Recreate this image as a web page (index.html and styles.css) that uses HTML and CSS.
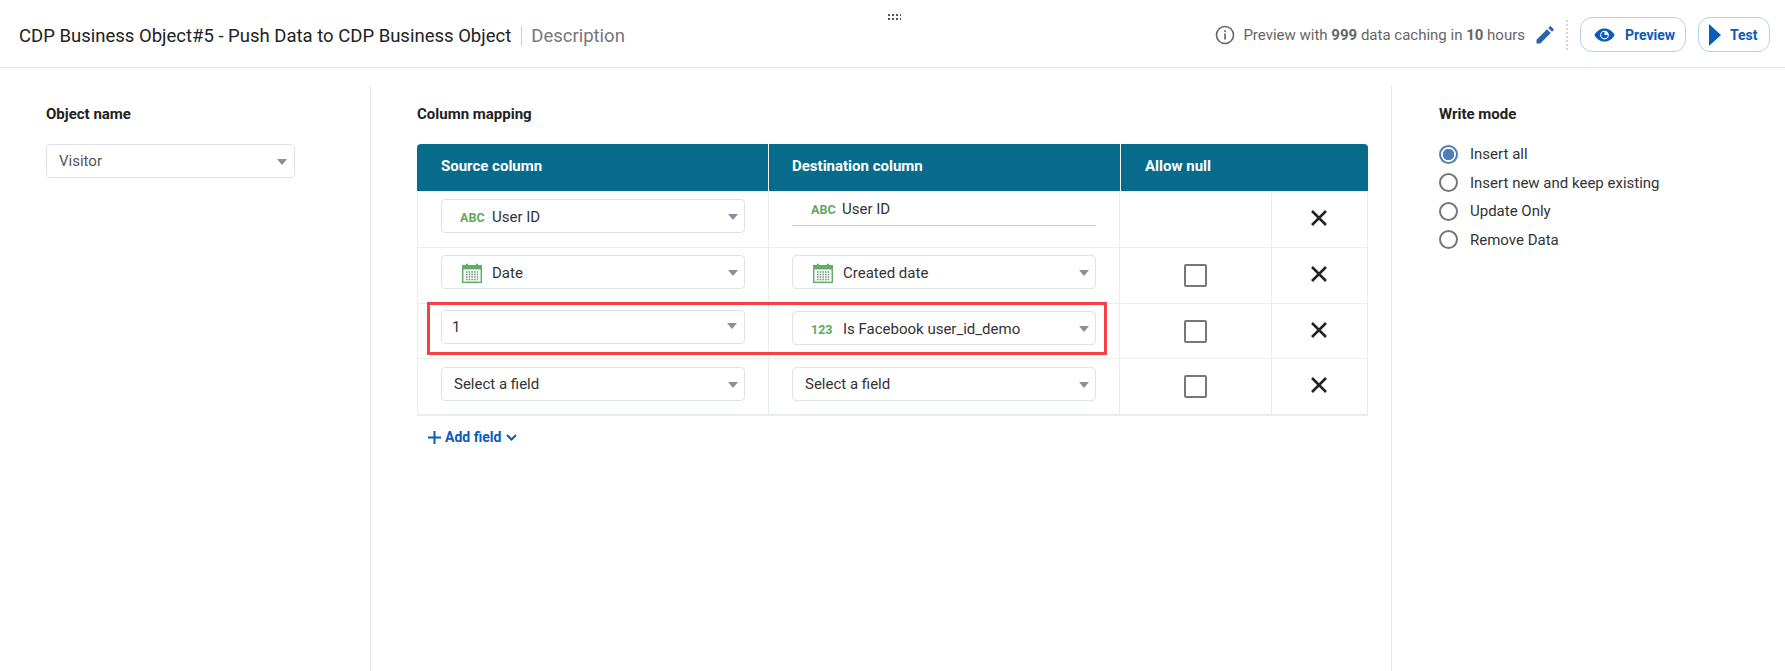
FILE: index.html
```html
<!DOCTYPE html>
<html>
  <head>
    <meta charset="UTF-8" />
    <title>CDP Business Object#5</title>
    <link rel="stylesheet" href="styles.css">
  </head>
  <body>
    <svg class="defs" width="0" height="0">
      <symbol id="calendar" viewBox="0 0 20 20">
        <rect x="0.7" y="2.7" width="18.6" height="16.6" fill="#f4faf2" stroke="#62ad6a" stroke-width="1.4"/>
        <rect x="1" y="3" width="18" height="3.4" fill="#62ad6a"/>
        <rect x="4" y="0.5" width="2" height="4.5" rx="1" fill="#62ad6a"/>
        <rect x="14" y="0.5" width="2" height="4.5" rx="1" fill="#62ad6a"/>
        <path d="M4 9h12M4 11.500h12M4 14h12M4 16.500h12" stroke="#6f9480" stroke-width="1.300" stroke-dasharray="1.500 1.200"/>
      </symbol>
      <symbol id="close" viewBox="0 0 18 18">
        <path d="M2 2l14 14M16 2L2 16" stroke="#222" stroke-width="2.600" fill="none"/>
      </symbol>
    </svg>

    <div class="drag_handle"></div>

    <header class="top_bar">
      <div class="top_title">
        <span class="title_name">CDP Business Object#5 - Push Data to CDP Business Object</span>
        <span class="title_desc">Description</span>
      </div>
      <div class="top_actions">
        <svg class="info_icon" width="20" height="20" viewBox="0 0 20 20">
          <circle cx="10" cy="10" r="8.500" fill="none" stroke="#666" stroke-width="1.600"/>
          <rect x="9.200" y="8.500" width="1.700" height="6" fill="#666"/>
          <rect x="9.200" y="5.300" width="1.700" height="1.800" fill="#666"/>
        </svg>
        <span class="cache_text">Preview with <b>999</b> data caching in <b>10</b> hours</span>
        <svg class="pencil_icon" width="18" height="18" viewBox="0 0 18 18">
          <path d="M0.500 17.500v-3.800L11 3.200l3.800 3.800L4.300 17.500zM12.200 2l1.500-1.500a1 1 0 0 1 1.400 0l2.400 2.400a1 1 0 0 1 0 1.400L16 5.800z" fill="#2a64ad"/>
        </svg>
        <span class="dotted_sep"></span>
        <button class="btn btn_preview">
          <svg width="21" height="14" viewBox="0 0 24 16">
            <path d="M0.500 8C3 3.200 7 0.500 12 0.500S21 3.200 23.500 8C21 12.800 17 15.500 12 15.500S3 12.800 0.500 8z" fill="#0a5cb8"/>
            <circle cx="12" cy="8" r="5" fill="#fff"/>
            <path d="M12 4.200a3.800 3.800 0 1 0 3.800 3.800H12z" fill="#0a5cb8"/>
          </svg>
          Preview
        </button>
        <button class="btn btn_test">
          <svg width="12" height="24" viewBox="0 0 13 24"><path d="M0 0l13 12L0 24z" fill="#0a5cb8"/></svg>
          Test
        </button>
      </div>
    </header>

    <main class="panels">
      <section class="panel panel_left">
        <div class="panel_label">Object name</div>
        <div class="select select_object">
          <span class="select_text">Visitor</span>
          <i class="caret"></i>
        </div>
      </section>

      <section class="panel panel_middle">
        <div class="panel_label">Column mapping</div>
        <div class="mapping">
          <div class="mapping_head">
            <div>Source column</div>
            <div>Destination column</div>
            <div>Allow null</div>
          </div>

          <div class="mapping_row">
            <div class="cell">
              <div class="select select_typed"><span class="type_tag">ABC</span><span>User ID</span><i class="caret"></i></div>
            </div>
            <div class="cell cell_plain">
              <div class="plain_field"><span class="type_tag">ABC</span><span>User ID</span></div>
            </div>
            <div class="cell"></div>
            <div class="cell cell_center"><svg class="x_icon"><use href="#close"/></svg></div>
          </div>

          <div class="mapping_row">
            <div class="cell">
              <div class="select select_typed"><svg class="cal_icon"><use href="#calendar"/></svg><span>Date</span><i class="caret"></i></div>
            </div>
            <div class="cell">
              <div class="select select_typed"><svg class="cal_icon"><use href="#calendar"/></svg><span>Created date</span><i class="caret"></i></div>
            </div>
            <div class="cell cell_center"><span class="checkbox"></span></div>
            <div class="cell cell_center"><svg class="x_icon"><use href="#close"/></svg></div>
          </div>

          <div class="mapping_row mapping_row_short">
            <div class="cell">
              <div class="select select_value"><span>1</span><i class="caret"></i></div>
            </div>
            <div class="cell">
              <div class="select select_typed"><span class="type_tag">123</span><span>Is Facebook user_id_demo</span><i class="caret"></i></div>
            </div>
            <div class="cell cell_center"><span class="checkbox"></span></div>
            <div class="cell cell_center"><svg class="x_icon"><use href="#close"/></svg></div>
            <div class="highlight_box"></div>
          </div>

          <div class="mapping_row">
            <div class="cell">
              <div class="select select_empty"><span>Select a field</span><i class="caret"></i></div>
            </div>
            <div class="cell">
              <div class="select select_empty"><span>Select a field</span><i class="caret"></i></div>
            </div>
            <div class="cell cell_center"><span class="checkbox"></span></div>
            <div class="cell cell_center"><svg class="x_icon"><use href="#close"/></svg></div>
          </div>
        </div>

        <div class="add_field">
          <svg width="13" height="13" viewBox="0 0 13 13"><path d="M6.500 0v13M0 6.500h13" stroke="#0a5cb8" stroke-width="2"/></svg>
          <span>Add field</span>
          <svg width="11" height="7" viewBox="0 0 11 7"><path d="M1 1l4.500 4.500L10 1" stroke="#0a5cb8" stroke-width="2" fill="none"/></svg>
        </div>
      </section>

      <section class="panel panel_right">
        <div class="panel_label">Write mode</div>
        <ul class="radio_list">
          <li><i class="radio radio_on"></i>Insert all</li>
          <li><i class="radio"></i>Insert new and keep existing</li>
          <li><i class="radio"></i>Update Only</li>
          <li><i class="radio"></i>Remove Data</li>
        </ul>
      </section>
    </main>
  </body>
</html>
```

FILE: styles.css
```css
* {
  margin: 0;
  padding: 0;
  box-sizing: border-box;
}
body {
  font-family: "Roboto", "Liberation Sans", sans-serif;
  font-size: 15px;
  color: #333;
  background: #fff;
  height: 671px;
  overflow: hidden;
  position: relative;
}
li {
  list-style-type: none;
}
.defs {
  position: absolute;
}
.drag_handle {
  position: absolute;
  left: 888px;
  top: 14px;
  width: 13px;
  height: 6px;
  background: radial-gradient(circle at 1px 1px, #555 1px, transparent 1.2px) 0 0 / 4px 4px;
}

/* top bar */
.top_bar {
  height: 68px;
  border-bottom: 1px solid #e4e6e8;
  display: flex;
  align-items: center;
  justify-content: space-between;
  padding: 0 15px 0 19px;
}
.top_title {
  display: flex;
  align-items: center;
  font-size: 18.500px;
  margin-top: 4px;
}
.title_name {
  color: #222;
  padding-right: 10px;
  border-right: 1px solid #ccc;
  line-height: 20px;
}
.title_desc {
  color: #777;
  padding-left: 9px;
}
.top_actions {
  display: flex;
  align-items: center;
  margin-top: 2px;
}
.info_icon {
  margin-right: 8px;
}
.cache_text {
  color: #666;
  margin-right: 11px;
}
.cache_text b {
  font-weight: 700;
}
.dotted_sep {
  height: 30px;
  border-left: 2px dotted #d5d5d5;
  margin: 0 12px;
}
.btn {
  height: 35px;
  border: 1px solid #b6cfe8;
  border-radius: 12px;
  background: #fff;
  color: #0a5cb8;
  font-family: inherit;
  font-size: 14px;
  font-weight: 700;
  display: flex;
  align-items: center;
}
.btn_preview {
  width: 106px;
  padding-left: 13px;
  gap: 10px;
  margin-right: 12px;
}
.btn_test {
  width: 72px;
  padding-left: 10px;
  gap: 9px;
}

/* three panels */
.panels {
  display: flex;
  padding-top: 18px;
}
.panel {
  height: 585px;
  padding-top: 18px;
}
.panel_label {
  font-weight: 700;
  color: #222;
  line-height: 20px;
  margin-bottom: 20px;
}
.panel_left {
  width: 371px;
  padding-left: 46px;
  border-right: 1px solid #e4e6e8;
}
.panel_middle {
  width: 1021px;
  padding-left: 46px;
  padding-right: 24px;
  border-right: 1px solid #e4e6e8;
}
.panel_right {
  padding-left: 47px;
}

/* select boxes */
.select {
  position: relative;
  height: 34px;
  border: 1px solid #dfe3e6;
  border-radius: 4px;
  display: flex;
  align-items: center;
  padding-left: 19px;
  background: #fff;
}
.select_typed {
  padding-top: 2px;
}
.select_object {
  width: 249px;
  padding-left: 12px;
  color: #555;
}
.select_value {
  padding-left: 10px;
  margin-top: -1px;
}
.select_empty {
  padding-left: 12px;
}
.caret {
  position: absolute;
  right: 6px;
  top: 14px;
  border-left: 5px solid transparent;
  border-right: 5px solid transparent;
  border-top: 6px solid #8a8f98;
}
.select_object .caret,
.select_value .caret {
  right: 7px;
}
.select_value .caret {
  top: 12px;
}
.type_tag {
  color: #62a85c;
  font-size: 12.500px;
  font-weight: 700;
  width: 31px;
}
.select .type_tag {
  margin-left: -1px;
  width: 32px;
}
.cal_icon {
  width: 20px;
  height: 20px;
  margin-right: 10px;
  margin-left: 1px;
}

/* mapping table */
.mapping {
  width: 951px;
}
.mapping_head,
.mapping_row {
  display: grid;
}
.mapping_head {
  grid-template-columns: 352px 352px 1fr;
  height: 48px;
  background: #076c8c;
  color: #fff;
  font-weight: 700;
  border-radius: 4px 4px 0 0;
  border-bottom: 1px solid #e6eef1;
}
.mapping_head div {
  padding-left: 24px;
  line-height: 44px;
  border-right: 1px solid #fff;
}
.mapping_head div:nth-child(2) {
  padding-left: 23px;
}
.mapping_head div:nth-child(3) {
  border-right: 0;
}
.mapping_row {
  grid-template-columns: 351px 351px 152px 96px;
  position: relative;
  height: 56px;
  border-bottom: 1px solid #e8edef;
  border-left: 1px solid #e8edef;
  border-right: 1px solid #e8edef;
}
.mapping_row_short {
  height: 55px;
}
.mapping_row:last-child {
  height: 57px;
  border-bottom-width: 2px;
}
.cell {
  padding: 7px 23px 0 23px;
  border-right: 1px solid #e8edef;
}
.mapping_row:last-child .cell {
  padding-top: 8px;
}
.cell:nth-child(4) {
  border-right: 0;
}
.cell_center,
.mapping_row:last-child .cell_center {
  padding: 0;
  display: flex;
  align-items: center;
  justify-content: center;
}
.plain_field {
  height: 27px;
  border-bottom: 1px solid #bccfe0;
  display: flex;
  align-items: center;
  padding: 0 0 6px 19px;
}
.checkbox {
  width: 23px;
  height: 23px;
  border: 2px solid #777;
  border-radius: 2px;
}
.x_icon {
  width: 18px;
  height: 18px;
  margin: -3px 3px 0 0;
}
.highlight_box {
  position: absolute;
  left: 9px;
  top: -2px;
  width: 680px;
  height: 53px;
  border: 3px solid #f44145;
}

.add_field {
  display: flex;
  align-items: center;
  color: #0a5cb8;
  font-size: 14px;
  font-weight: 700;
  margin: 13px 0 0 11px;
  line-height: 16px;
}
.add_field span {
  margin: 0 5px 0 4px;
}

/* write mode radios */
.radio_list {
  margin-top: -4px;
}
.radio_list li {
  height: 28.500px;
  display: flex;
  align-items: center;
}
.radio {
  width: 19px;
  height: 19px;
  border: 2px solid #777;
  border-radius: 50%;
  margin-right: 12px;
}
.radio_on {
  border-color: #4f7fb5;
  background: radial-gradient(circle, #4f7fb5 0 5.500px, #fff 6px);
}
```
